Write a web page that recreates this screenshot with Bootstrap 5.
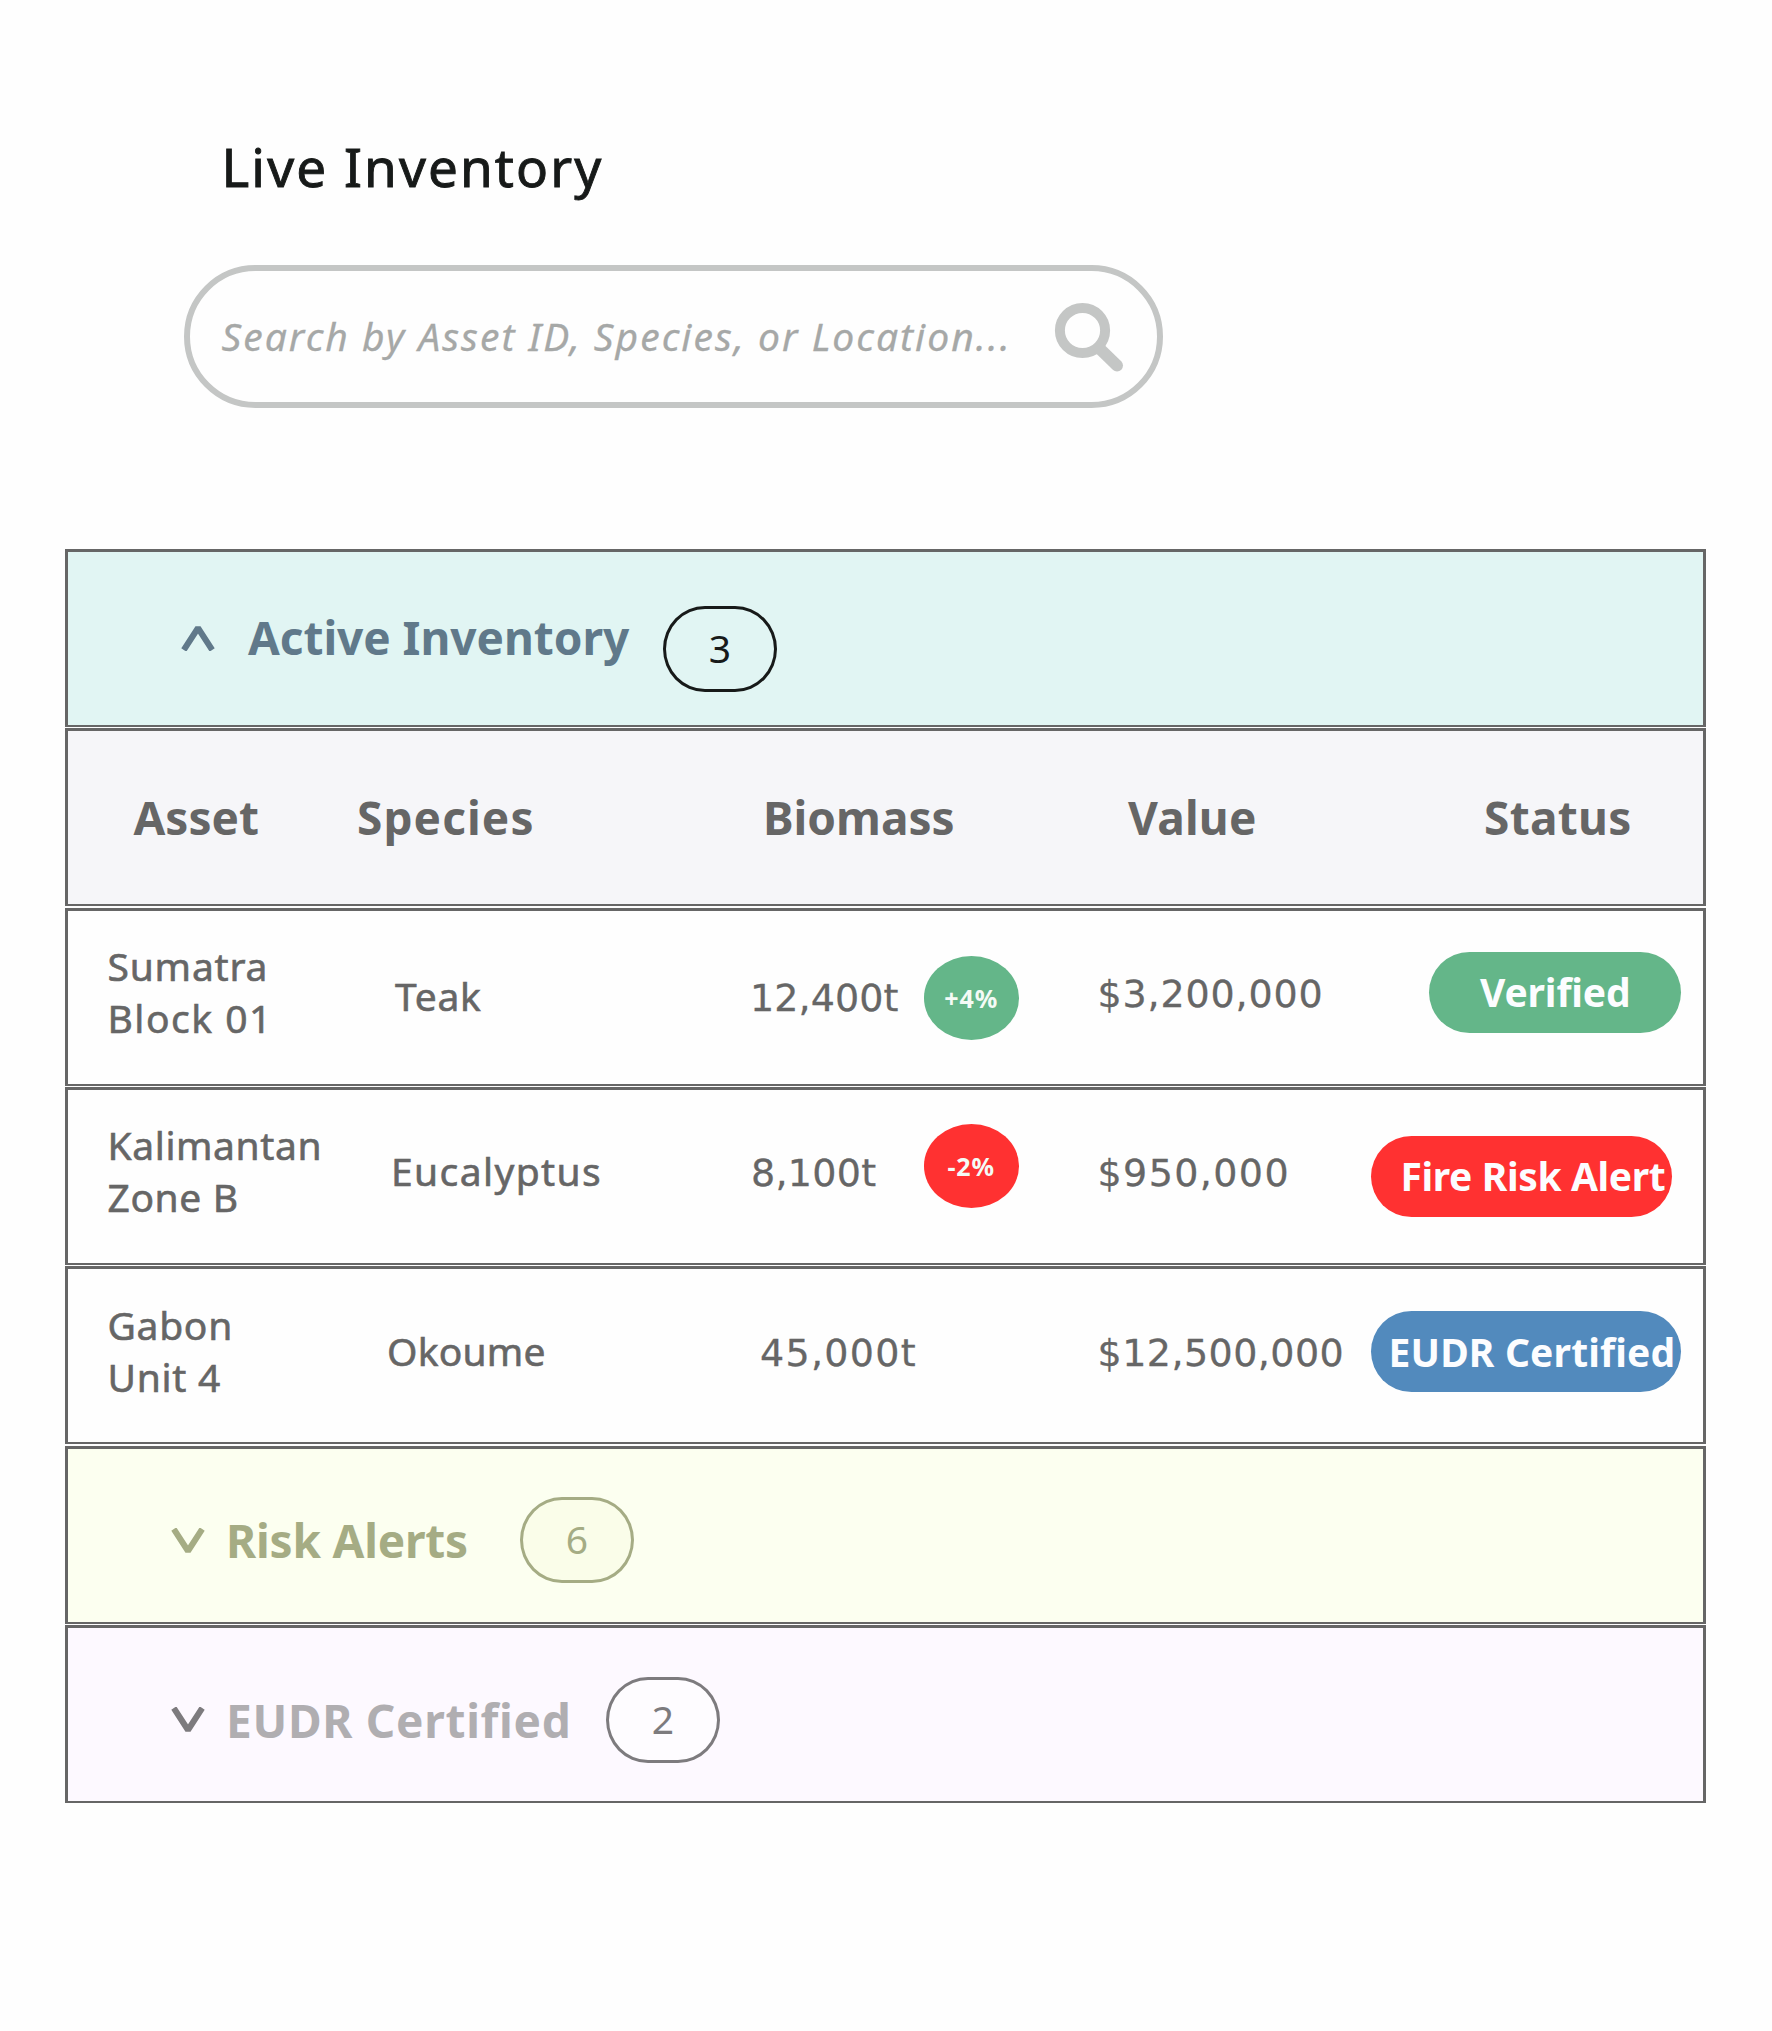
<!DOCTYPE html>
<html lang="en">
<head>
<meta charset="utf-8">
<meta name="viewport" content="width=device-width, initial-scale=1">
<title>Live Inventory</title>
<link href="https://cdn.jsdelivr.net/npm/bootstrap@5.3.0/dist/css/bootstrap.min.css" rel="stylesheet">
<style>
  body { font-family: "Noto Sans", "Open Sans", sans-serif; background: #fefefe; color: #666; }
  .page-shell { padding: 135px 66px 0 65px; }
  .page-title { font-size: 53px; line-height: 64px; letter-spacing: 2.1px; color: #171a19; margin: 0 0 66px 156.5px; -webkit-text-stroke: .9px; }
  .search-box { width: 979px; height: 143px; margin-left: 119px; padding: 0 33px 0 31.5px; border: 6px solid #c4c6c5; border-radius: 72px; }
  .search-text { font-size: 39px; letter-spacing: 2.02px; color: #a6a8a7; line-height: 52px; margin-top: -1px; -webkit-text-stroke: .3px; }
  .search-icon { width: 70px; height: 70px; margin-top: 1px; }

  .inventory { margin-top: 141px; display: grid; grid-auto-rows: 178px; row-gap: 1.33px; }
  .line-row { border: 3px solid #666; border-bottom-width: 2px; font-size: 39px; line-height: 52px; }
  .data-row { -webkit-text-stroke: .6px; }
  .head-text { font-size: 46px; line-height: 52px; font-weight: 700; white-space: nowrap; }
  .row-active { background: #e1f5f3; }
  .row-heads { background: #f6f6f9; }
  .row-risk { background: #fcfff0; color: #a5ac84; }
  .row-eudr { background: #fdf9ff; color: #7d7b7e; }

  .c-asset { width: 287px; } .c-species { width: 385px; } .c-biomass { width: 347px; }
  .c-value { width: 268px; } .c-status { width: 348px; }
  .line-row > [class*="c-"] { white-space: nowrap; flex: none; }

  .count-pill { width: 114px; height: 86px; border: 3px solid currentColor; border-radius: 42px / 43px; padding-bottom: 2px; }
  .chevron { width: 34px; height: 26px; flex: none; }

  .row-active .chevron { color: #60798a; margin: 73px 33px 0 113px; }
  .row-active .head-text { color: #60798a; padding-top: 59px; width: 415px; letter-spacing: -.05px; }
  .row-active .count-pill { color: #171a19; margin-top: 54px; }
  .row-risk .chevron, .row-eudr .chevron { margin: 79px 21px 0 103px; }
  .row-risk .head-text { padding-top: 65px; width: 294px; letter-spacing: -.2px; }
  .row-risk .count-pill { margin-top: 48px; background: #fafde9; }
  .row-eudr .head-text { padding-top: 66px; width: 380px; letter-spacing: .7px; color: #b0aeb1; }
  .row-eudr .count-pill { margin-top: 49px; background: #fefcff; }

  .row-heads > div { padding-top: 60px; }
  .row-heads .c-asset { padding-left: 65.5px; }
  .row-heads .c-species { padding-left: 2px; letter-spacing: 1.1px; }
  .row-heads .c-biomass { padding-left: 23px; }
  .row-heads .c-value { padding-left: 41px; letter-spacing: .21px; }
  .row-heads .c-status { padding-left: 129px; letter-spacing: .3px; }

  .data-row .c-asset { padding: 29px 0 0 39.5px; letter-spacing: .8px; }
  .data-row .c-value, .amount { font-family: "DejaVu Sans", sans-serif; font-size: 38px; -webkit-text-stroke: .3px; }
  .data-row .c-value { padding-left: 10.5px; }
  .ls-wide { letter-spacing: 1.5px; }
  .ls-tight { letter-spacing: .6px; }
  .r-teak .c-species { padding: 59px 0 0 40px; letter-spacing: .72px; }
  .r-teak .c-biomass { padding-left: 10px; }
  .r-teak .amount { margin-top: 61px; width: 173.5px; letter-spacing: .1px; }
  .r-teak .delta { margin-top: 45px; background: #64b689; }
  .r-teak .c-value { padding-top: 57px; letter-spacing: .85px; }
  .r-euca .c-species { padding: 55px 0 0 36px; letter-spacing: 1.4px; }
  .r-euca .c-biomass { padding-left: 11px; }
  .r-euca .amount { margin-top: 57px; width: 172.5px; letter-spacing: .3px; }
  .r-euca .delta { margin-top: 34px; background: #ff3131; }
  .r-euca .c-value { padding-top: 57px; letter-spacing: 1.4px; }
  .r-okou .c-asset { padding-top: 30px; letter-spacing: .7px; }
  .r-okou .c-species { padding: 56px 0 0 32px; letter-spacing: .2px; }
  .r-okou .c-biomass { padding: 58px 0 0 20px; }
  .r-okou .amount { letter-spacing: 1.3px; }
  .r-okou .c-value { padding-top: 58px; letter-spacing: .45px; }

  .delta { width: 95.5px; height: 84px; border-radius: 50%; color: #f4fbf6; font-size: 25px; font-weight: 700; letter-spacing: .9px; -webkit-text-stroke: 0; }
  .status-tag { height: 81px; border-radius: 41px; color: #fcfdff; font-weight: 700; -webkit-text-stroke: 0; }
  .tag-verified { width: 251.5px; margin: 41px 0 0 74px; background: #64b689; padding-left: 51px; letter-spacing: -.14px; }
  .tag-fire { width: 301.5px; margin: 46px 0 0 15.5px; background: #ff3131; padding-left: 30px; letter-spacing: -.38px; }
  .tag-eudr { width: 310px; margin: 42px 0 0 15.5px; background: #528abd; padding-left: 18px; letter-spacing: .16px; }
</style>
<script src="https://cdn.jsdelivr.net/npm/bootstrap@5.3.0/dist/js/bootstrap.bundle.min.js"></script>
</head>
<body>
<main class="page-shell">
  <h1 class="page-title fw-normal">Live Inventory</h1>
  <div class="search-box d-flex align-items-center justify-content-between">
    <span class="search-text fst-italic text-nowrap">Search by Asset ID, Species, or Location...</span>
    <svg class="search-icon" viewBox="0 0 70 70" fill="none" stroke="#c4c6c5">
      <circle cx="28.5" cy="28.5" r="22.6" stroke-width="10"/>
      <path d="M45 46 L63 63.5" stroke-width="12" stroke-linecap="round"/>
    </svg>
  </div>

  <section class="inventory">
    <div class="line-row row-active d-flex align-items-start">
      <svg class="chevron" viewBox="0 0 34 26" fill="none" stroke="currentColor" stroke-width="6"><path d="M2.8 25 L17 3 L31.2 25" stroke-linejoin="bevel"/></svg>
      <span class="head-text">Active Inventory</span>
      <span class="count-pill d-flex align-items-center justify-content-center">3</span>
    </div>

    <div class="line-row row-heads head-text d-flex align-items-start">
      <div class="c-asset">Asset</div>
      <div class="c-species">Species</div>
      <div class="c-biomass">Biomass</div>
      <div class="c-value">Value</div>
      <div class="c-status">Status</div>
    </div>

    <div class="line-row data-row r-teak d-flex align-items-start">
      <div class="c-asset">Sumatra<br><span class="ls-wide">Block 01</span></div>
      <div class="c-species">Teak</div>
      <div class="c-biomass d-flex align-items-start"><span class="amount">12,400t</span><span class="delta d-flex align-items-center justify-content-center">+4%</span></div>
      <div class="c-value">$3,200,000</div>
      <div class="c-status"><div class="status-tag tag-verified d-flex align-items-center">Verified</div></div>
    </div>

    <div class="line-row data-row r-euca d-flex align-items-start">
      <div class="c-asset"><span class="ls-tight">Kalimantan<br>Zone B</span></div>
      <div class="c-species">Eucalyptus</div>
      <div class="c-biomass d-flex align-items-start"><span class="amount">8,100t</span><span class="delta d-flex align-items-center justify-content-center">-2%</span></div>
      <div class="c-value">$950,000</div>
      <div class="c-status"><div class="status-tag tag-fire d-flex align-items-center">Fire Risk Alert</div></div>
    </div>

    <div class="line-row data-row r-okou d-flex align-items-start">
      <div class="c-asset">Gabon<br>Unit 4</div>
      <div class="c-species">Okoume</div>
      <div class="c-biomass d-flex align-items-start"><span class="amount">45,000t</span></div>
      <div class="c-value">$12,500,000</div>
      <div class="c-status"><div class="status-tag tag-eudr d-flex align-items-center">EUDR Certified</div></div>
    </div>

    <div class="line-row row-risk d-flex align-items-start">
      <svg class="chevron" viewBox="0 0 34 26" fill="none" stroke="currentColor" stroke-width="6"><path d="M2.8 1 L17 23 L31.2 1" stroke-linejoin="bevel"/></svg>
      <span class="head-text">Risk Alerts</span>
      <span class="count-pill d-flex align-items-center justify-content-center">6</span>
    </div>

    <div class="line-row row-eudr d-flex align-items-start">
      <svg class="chevron" viewBox="0 0 34 26" fill="none" stroke="currentColor" stroke-width="6"><path d="M2.8 1 L17 23 L31.2 1" stroke-linejoin="bevel"/></svg>
      <span class="head-text">EUDR Certified</span>
      <span class="count-pill d-flex align-items-center justify-content-center">2</span>
    </div>
  </section>
</main>
</body>
</html>
